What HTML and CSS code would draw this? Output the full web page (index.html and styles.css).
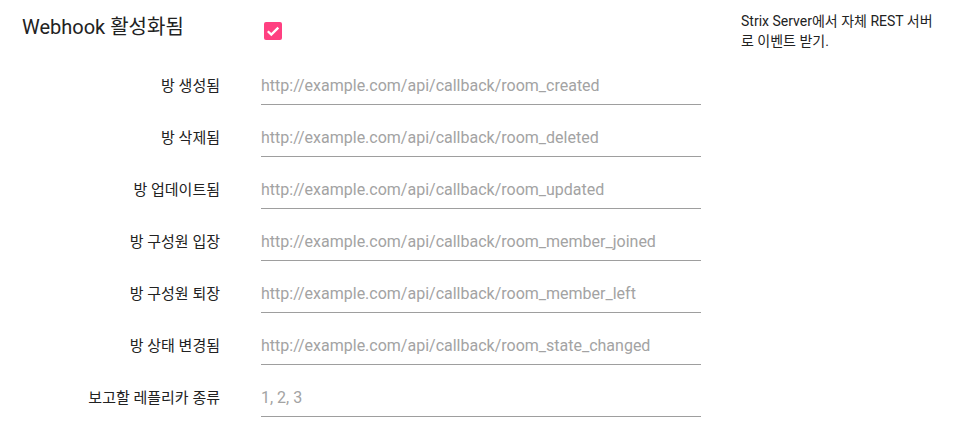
FILE: index.html
```html
<!DOCTYPE html>
<html lang="ko">
<head>
  <meta charset="UTF-8" />
  <title>Webhook 설정</title>
  <link rel="stylesheet" href="styles.css">
</head>
<body>

  <div class="settings">
    <!-- Header -->
    <div class="title">Webhook 활성화됨</div>
    <div class="toggle">
      <span class="check">
        <svg viewBox="0 0 18 18" width="18" height="18"><path d="M3.8 9.2l3.5 3.4 7-7" fill="none" stroke="#fff" stroke-width="2.3"/></svg>
      </span>
    </div>
    <div class="desc">Strix Server에서 자체 REST 서버로 이벤트 받기.</div>

    <!-- Callback fields -->
    <label class="field-label">방 생성됨</label>
    <div class="field"><input type="text" placeholder="http://example.com/api/callback/room_created"></div>

    <label class="field-label">방 삭제됨</label>
    <div class="field"><input type="text" placeholder="http://example.com/api/callback/room_deleted"></div>

    <label class="field-label">방 업데이트됨</label>
    <div class="field"><input type="text" placeholder="http://example.com/api/callback/room_updated"></div>

    <label class="field-label">방 구성원 입장</label>
    <div class="field"><input type="text" placeholder="http://example.com/api/callback/room_member_joined"></div>

    <label class="field-label">방 구성원 퇴장</label>
    <div class="field"><input type="text" placeholder="http://example.com/api/callback/room_member_left"></div>

    <label class="field-label">방 상태 변경됨</label>
    <div class="field"><input type="text" placeholder="http://example.com/api/callback/room_state_changed"></div>

    <label class="field-label">보고할 레플리카 종류</label>
    <div class="field"><input type="text" placeholder="1, 2, 3"></div>
  </div>

</body>
</html>
```

FILE: styles.css
```css
* { margin: 0; padding: 0; box-sizing: border-box; }
body { font-family: Roboto, "Noto Sans CJK KR", sans-serif; background: #fff; color: #212121; }

/* label | gap | input | gap | help text */
.settings { display: grid; grid-template-columns: 220px 41px 440px 40px 215px; grid-auto-rows: 52px; padding-top: 1px; }

.title { grid-column: 1 / 3; padding: 14px 0 0 22px; font-size: 20px; line-height: 24px; color: #222; white-space: nowrap; }
.toggle { grid-column: 3; padding: 21px 0 0 3px; }
.check { display: block; width: 18px; height: 18px; background: #ff4081; border-radius: 2px; }
.check svg { display: block; }
.desc { grid-column: 5; grid-row: span 2; align-self: start; width: 200px; padding-top: 10px; font-size: 14px; line-height: 20px; color: #222; }

.field-label { grid-column: 1; text-align: right; font-size: 15px; line-height: 20px; color: #222; padding-top: 23px; }
.field { grid-column: 3; display: flex; align-items: flex-end; }
.field input { width: 100%; height: 34px; border: none; border-bottom: 1px solid #9e9e9e; font-family: inherit; font-size: 16px; color: #222; padding: 0 0 4px; outline: none; background: transparent; }
.field input::placeholder { color: #a3a3a3; }
```
